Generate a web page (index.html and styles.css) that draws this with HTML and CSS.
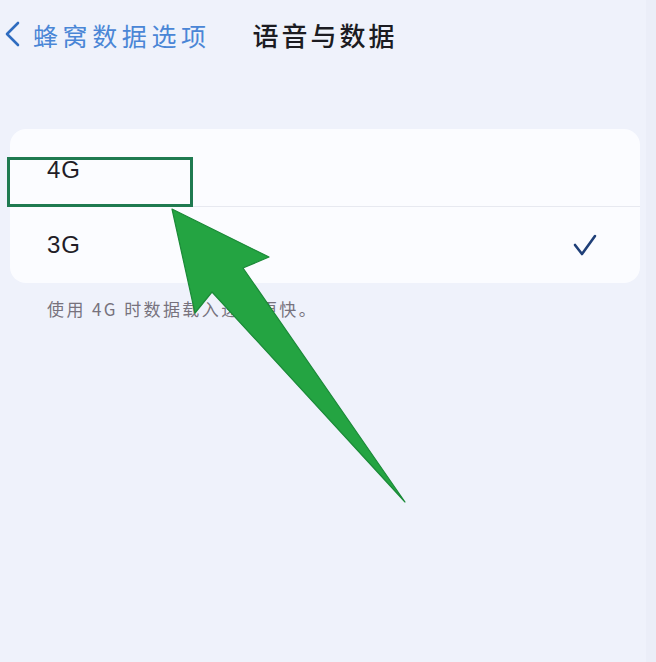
FILE: index.html
```html
<!DOCTYPE html>
<html lang="zh-CN">
<head>
<meta charset="utf-8">
<title>语音与数据</title>
<link rel="stylesheet" href="styles.css">
</head>
<body>
<div class="page">
  <header class="nav">
    <a class="back">
      <svg class="chev" width="16" height="26" viewBox="0 0 16 26"><path d="M14 2 L3 13 L14 24" fill="none" stroke="#2f6cc0" stroke-width="2.6" stroke-linecap="round" stroke-linejoin="round"/></svg>
      <span class="back-text">蜂窝数据选项</span>
    </a>
    <h1 class="title">语音与数据</h1>
  </header>

  <section class="group">
    <div class="row"><span class="label first">4G</span></div>
    <div class="row"><span class="label">3G</span>
      <svg class="check" width="26" height="24" viewBox="0 0 26 24"><path d="M3 12 L10 21 L23 3" fill="none" stroke="#1f3f78" stroke-width="2.6" stroke-linecap="round" stroke-linejoin="round"/></svg>
    </div>
  </section>
  <p class="note">使用 4G 时数据载入速度更快。</p>

  <div class="highlight"></div>
  <svg class="arrow" width="656" height="662" viewBox="0 0 656 662">
    <polygon points="172,209 269,257 243,268 405,502 212,292 195,313" fill="#24a442" stroke="#1b8a38" stroke-width="1.2" stroke-linejoin="round"/>
  </svg>
</div>
</body>
</html>
```
FILE: styles.css
```css
* { box-sizing: border-box; }
html, body { margin: 0; padding: 0; }
body {
  background: #eff2fb;
  font-family: "Noto Sans", "Noto Sans CJK SC", sans-serif;
  width: 656px;
  height: 662px;
  overflow: hidden;
}
.page {
  position: relative;
  width: 656px;
  height: 662px;
  background: #eff2fb;
  border-right: 10px solid #ebeef8;
}
.nav {
  display: flex;
  align-items: center;
  height: 70px;
  padding-left: 4px;
}
.back {
  display: flex;
  align-items: center;
  gap: 13px;
  color: #4a86d6;
}
.chev { display: block; margin-top: -2px; }
.back-text {
  font-family: "Noto Sans CJK SC", sans-serif;
  font-size: 25px;
  letter-spacing: 4.6px;
  line-height: 1;
}
.title {
  margin: 0 0 0 42px;
  font-family: "Noto Sans CJK SC", sans-serif;
  font-size: 26px;
  font-weight: 500;
  letter-spacing: 3px;
  color: #1c1c22;
  line-height: 1;
}
.group {
  margin: 59px 0 0 10px;
  width: 630px;
  background: #fbfcff;
  border-radius: 16px;
  overflow: hidden;
}
.row {
  height: 77px;
  display: flex;
  align-items: center;
  justify-content: space-between;
  padding: 0 42px 0 37px;
}
.row + .row { border-top: 1.5px solid #e7e9f0; }
.label {
  font-family: "Liberation Sans", sans-serif;
  font-size: 24px;
  letter-spacing: 1px;
  color: #221c26;
}
.label.first { margin-top: 4px; }
.check { display: block; }
.note {
  margin: 13px 0 0 47px;
  font-family: "Noto Sans CJK SC", sans-serif;
  font-size: 17px;
  letter-spacing: 2.4px;
  color: #77727d;
}
.highlight {
  position: absolute;
  left: 7px;
  top: 157px;
  width: 186px;
  height: 50px;
  border: 3px solid #1f7a50;
}
.arrow {
  position: absolute;
  left: 0;
  top: 0;
  pointer-events: none;
}
```
